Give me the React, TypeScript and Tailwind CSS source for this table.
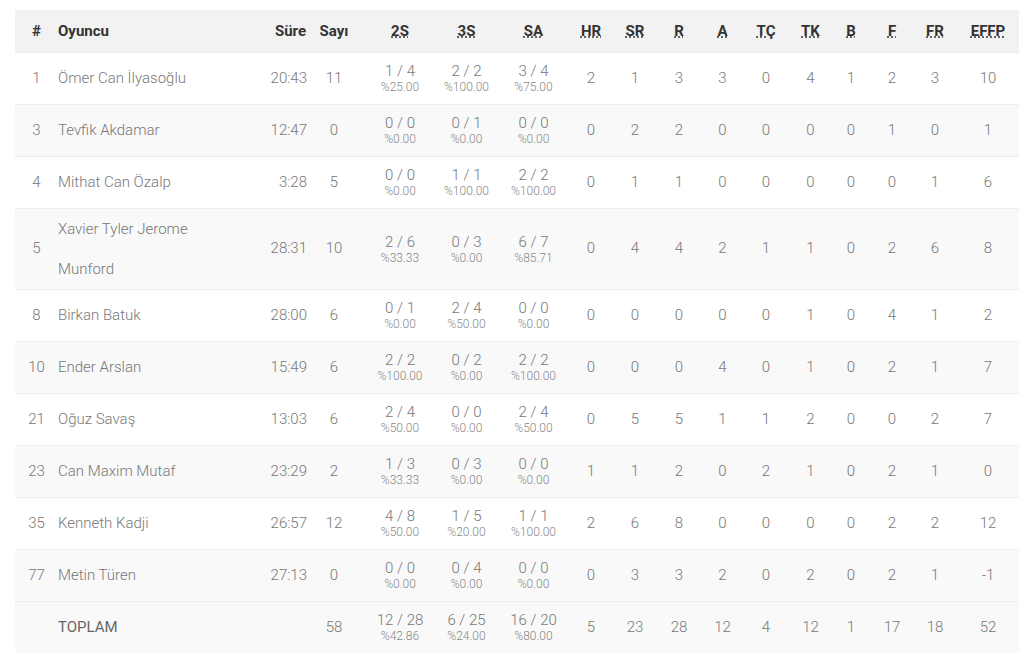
import React from 'react';

type Shot = [number, number];

interface Player {
  no: number;
  name: string;
  min: string;
  pts: number;
  two: Shot;
  three: Shot;
  ft: Shot;
  rest: number[]; // HR SR R A TÇ TK B F FR EFFP
}

const players: Player[] = [
  { no: 1, name: 'Ömer Can İlyasoğlu', min: '20:43', pts: 11, two: [1, 4], three: [2, 2], ft: [3, 4], rest: [2, 1, 3, 3, 0, 4, 1, 2, 3, 10] },
  { no: 3, name: 'Tevfik Akdamar', min: '12:47', pts: 0, two: [0, 0], three: [0, 1], ft: [0, 0], rest: [0, 2, 2, 0, 0, 0, 0, 1, 0, 1] },
  { no: 4, name: 'Mithat Can Özalp', min: '3:28', pts: 5, two: [0, 0], three: [1, 1], ft: [2, 2], rest: [0, 1, 1, 0, 0, 0, 0, 0, 1, 6] },
  { no: 5, name: 'Xavier Tyler Jerome Munford', min: '28:31', pts: 10, two: [2, 6], three: [0, 3], ft: [6, 7], rest: [0, 4, 4, 2, 1, 1, 0, 2, 6, 8] },
  { no: 8, name: 'Birkan Batuk', min: '28:00', pts: 6, two: [0, 1], three: [2, 4], ft: [0, 0], rest: [0, 0, 0, 0, 0, 1, 0, 4, 1, 2] },
  { no: 10, name: 'Ender Arslan', min: '15:49', pts: 6, two: [2, 2], three: [0, 2], ft: [2, 2], rest: [0, 0, 0, 4, 0, 1, 0, 2, 1, 7] },
  { no: 21, name: 'Oğuz Savaş', min: '13:03', pts: 6, two: [2, 4], three: [0, 0], ft: [2, 4], rest: [0, 5, 5, 1, 1, 2, 0, 0, 2, 7] },
  { no: 23, name: 'Can Maxim Mutaf', min: '23:29', pts: 2, two: [1, 3], three: [0, 3], ft: [0, 0], rest: [1, 1, 2, 0, 2, 1, 0, 2, 1, 0] },
  { no: 35, name: 'Kenneth Kadji', min: '26:57', pts: 12, two: [4, 8], three: [1, 5], ft: [1, 1], rest: [2, 6, 8, 0, 0, 0, 0, 2, 2, 12] },
  { no: 77, name: 'Metin Türen', min: '27:13', pts: 0, two: [0, 0], three: [0, 4], ft: [0, 0], rest: [0, 3, 3, 2, 0, 2, 0, 2, 1, -1] },
];

const totals = { pts: 58, two: [12, 28] as Shot, three: [6, 25] as Shot, ft: [16, 20] as Shot, rest: [5, 23, 28, 12, 4, 12, 1, 17, 18, 52] };

const restHeads = [
  { abbr: 'HR', title: 'Hücum Ribaundu', cls: 'pl-1.5' },
  { abbr: 'SR', title: 'Savunma Ribaundu', cls: '' },
  { abbr: 'R', title: 'Ribaund', cls: '' },
  { abbr: 'A', title: 'Asist', cls: '' },
  { abbr: 'TÇ', title: 'Top Çalma', cls: '' },
  { abbr: 'TK', title: 'Top Kaybı', cls: 'pl-0.5' },
  { abbr: 'B', title: 'Blok', cls: '' },
  { abbr: 'F', title: 'Faul', cls: '' },
  { abbr: 'FR', title: 'Faul Ramınan', cls: 'pr-1' },
  { abbr: 'EFFP', title: 'Verimlilik', cls: 'pr-1' },
];

function pct([m, a]: Shot) {
  return '%' + (a === 0 ? 0 : (m / a) * 100).toFixed(2);
}

function ShotCell({ s, cls = '' }: { s: Shot; cls?: string }) {
  return (
    <td className={`text-center ${cls}`}>
      <div className="text-[15px] leading-[18px]">
        {s[0]} / {s[1]}
      </div>
      <div className="text-xs leading-[14px] text-[#888]">{pct(s)}</div>
    </td>
  );
}

export default function App() {
  return (
    <div className="bg-white pl-[15px] pt-[10px] font-['Roboto',sans-serif]">
      <table className="table-fixed w-[1004px] text-[15px] font-light text-[#777]">
        <colgroup>
          <col className="w-[35px]" />
          <col className="w-[176px]" />
          <col className="w-[81px]" />
          <col className="w-[60px]" />
          <col className="w-[66px]" />
          <col className="w-[67px]" />
          <col className="w-[63px]" />
          <col className="w-[50px]" />
          <col className="w-[44px]" />
          <col className="w-[44px]" />
          <col className="w-[43px]" />
          <col className="w-[44px]" />
          <col className="w-[43px]" />
          <col className="w-[40px]" />
          <col className="w-[42px]" />
          <col className="w-[48px]" />
          <col className="w-[58px]" />
        </colgroup>

        <thead>
          <tr className="h-[42px] bg-[#f2f2f2] text-[#333] font-bold">
            <th className="text-center pl-2">#</th>
            <th className="text-left pl-2">Oyuncu</th>
            <th className="text-right pr-px">Süre</th>
            <th className="text-center pr-1.5">Sayı</th>
            <th className="text-center"><abbr title="İki Sayılık">2S</abbr></th>
            <th className="text-center"><abbr title="Üç Sayılık">3S</abbr></th>
            <th className="text-center pl-1"><abbr title="Serbest Atış">SA</abbr></th>
            {restHeads.map((h) => (
              <th key={h.abbr} className={`text-center ${h.cls}`}>
                <abbr title={h.title}>{h.abbr}</abbr>
              </th>
            ))}
          </tr>
        </thead>

        <tbody>
          {players.map((p) => (
            <tr key={p.no} className="h-[52px] border-t border-[#ededed] odd:bg-white even:bg-[#f9f9f9]">
              <td className="text-center pl-2">{p.no}</td>
              <td className="pl-2 pr-1 leading-10">{p.name}</td>
              <td className="text-right">{p.min}</td>
              <td className="text-center pr-1.5">{p.pts}</td>
              <ShotCell s={p.two} />
              <ShotCell s={p.three} />
              <ShotCell s={p.ft} cls="pl-1" />
              {p.rest.map((v, i) => (
                <td key={i} className={`text-center ${restHeads[i].cls}`}>{v}</td>
              ))}
            </tr>
          ))}
        </tbody>

        <tfoot>
          <tr className="h-[52px] border-t border-[#ededed] bg-[#f9f9f9]">
            <td />
            <td className="pl-2 font-normal text-[#666]">TOPLAM</td>
            <td />
            <td className="text-center pr-1.5">{totals.pts}</td>
            <ShotCell s={totals.two} />
            <ShotCell s={totals.three} />
            <ShotCell s={totals.ft} cls="pl-1" />
            {totals.rest.map((v, i) => (
              <td key={i} className={`text-center ${restHeads[i].cls}`}>{v}</td>
            ))}
          </tr>
        </tfoot>
      </table>
    </div>
  );
}
